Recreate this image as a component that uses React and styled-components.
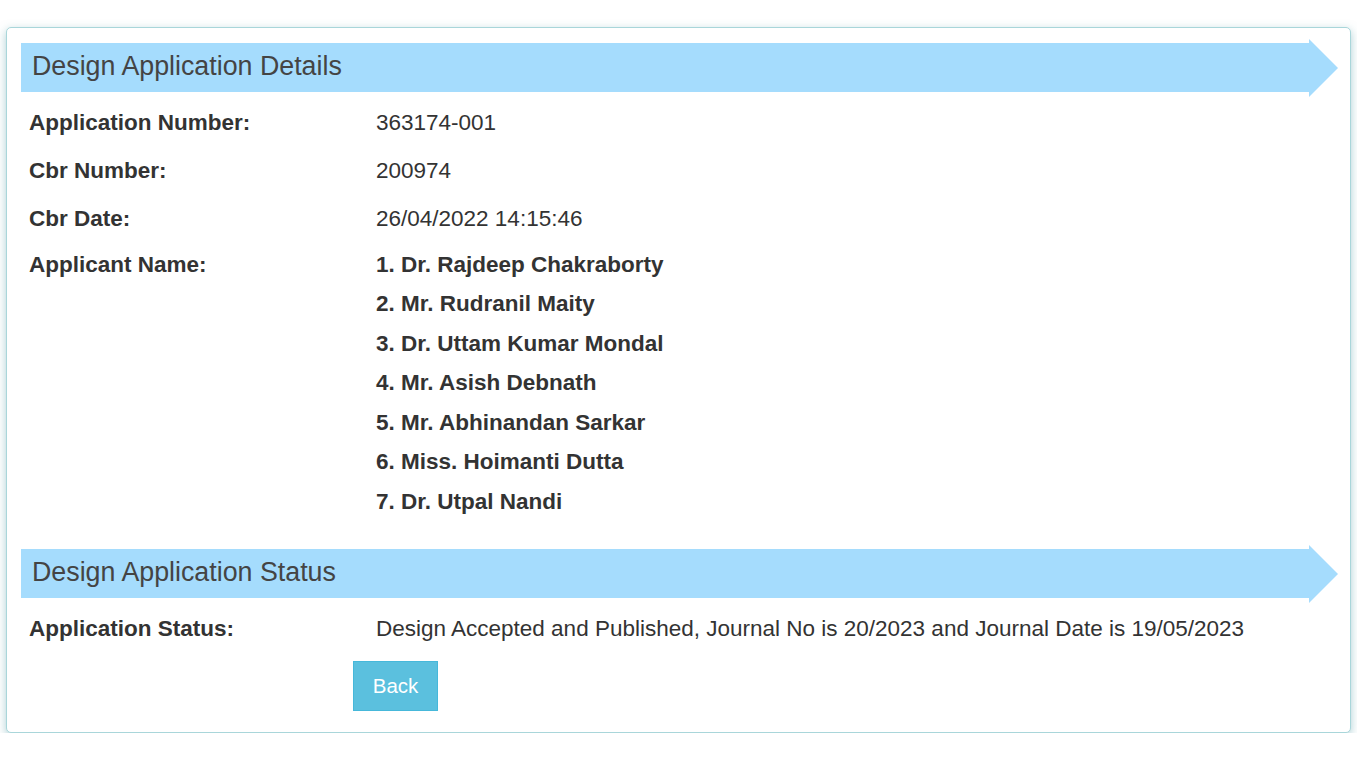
import React from 'react'
import styled, { createGlobalStyle } from 'styled-components'

const GlobalStyle = createGlobalStyle`
  body {
    margin: 0;
    background: #fff;
    font-family: "Liberation Sans", Arial, sans-serif;
    color: #333;
  }
`;

const Page = styled.div`
  padding: 27px 6px 0 6px;
`;

const Card = styled.div`
  background: #fff;
  border: 1px solid #a9d6da;
  border-radius: 5px;
  box-shadow: 0 3px 10px rgba(90, 160, 170, 0.5);
  padding: 10px 12px 21px 14px;
`;

const Banner = styled.div`
  display: flex;
  align-items: center;
  height: 59px;
  margin: ${p => p.$top || 0}px 0 1px 0;
`;

const BannerBar = styled.div`
  flex: 1;
  height: 49px;
  background: #a5dcfd;
  display: flex;
  align-items: center;
  padding-left: 11px;
  padding-bottom: 2px;
  font-size: 26.8px;
  color: #444;
  box-sizing: border-box;
`;

const BannerTip = styled.div`
  width: 0;
  height: 0;
  border-top: 29.5px solid transparent;
  border-bottom: 29.5px solid transparent;
  border-left: 29px solid #a5dcfd;
`;

const Row = styled.div`
  display: grid;
  grid-template-columns: 355px 1fr;
  padding: ${p => (p.$tight ? '6.5px 0 8px' : '8.5px 0 7.5px')};
  font-size: 22.5px;
  line-height: 32px;
`;

const Label = styled.div`
  padding-left: 8px;
  font-weight: bold;
  color: #333;
`;

const Value = styled.div`
  color: #333;
`;

const NameList = styled.div`
  display: flex;
  flex-direction: column;
  gap: 7.6px;
  font-weight: bold;
`;

const Actions = styled.div`
  padding: 9px 0 0 332px;
`;

const Button = styled.button`
  height: 50px;
  width: 85px;
  background: #5bc0de;
  border: 1px solid #46b8da;
  color: #fff;
  font-family: "Liberation Sans", Arial, sans-serif;
  font-size: 20.5px;
  padding: 0;
  cursor: pointer;
`;

const names = [
  '1. Dr. Rajdeep Chakraborty',
  '2. Mr. Rudranil Maity',
  '3. Dr. Uttam Kumar Mondal',
  '4. Mr. Asish Debnath',
  '5. Mr. Abhinandan Sarkar',
  '6. Miss. Hoimanti Dutta',
  '7. Dr. Utpal Nandi',
];

const SectionBanner = ({ title, top }) => (
  <Banner $top={top}>
    <BannerBar>{title}</BannerBar>
    <BannerTip />
  </Banner>
);

const App = () => {
  return (
    <>
      <GlobalStyle />
      <Page>
        <Card>
          <SectionBanner title="Design Application Details" />
          <Row>
            <Label>Application Number:</Label>
            <Value>363174-001</Value>
          </Row>
          <Row>
            <Label>Cbr Number:</Label>
            <Value>200974</Value>
          </Row>
          <Row>
            <Label>Cbr Date:</Label>
            <Value>26/04/2022 14:15:46</Value>
          </Row>
          <Row $tight>
            <Label>Applicant Name:</Label>
            <NameList>
              {names.map(n => <div key={n}>{n}</div>)}
            </NameList>
          </Row>
          <SectionBanner title="Design Application Status" top={18} />
          <Row>
            <Label>Application Status:</Label>
            <Value>Design Accepted and Published, Journal No is 20/2023 and Journal Date is 19/05/2023</Value>
          </Row>
          <Actions>
            <Button>Back</Button>
          </Actions>
        </Card>
      </Page>
    </>
  )
}

export default App
